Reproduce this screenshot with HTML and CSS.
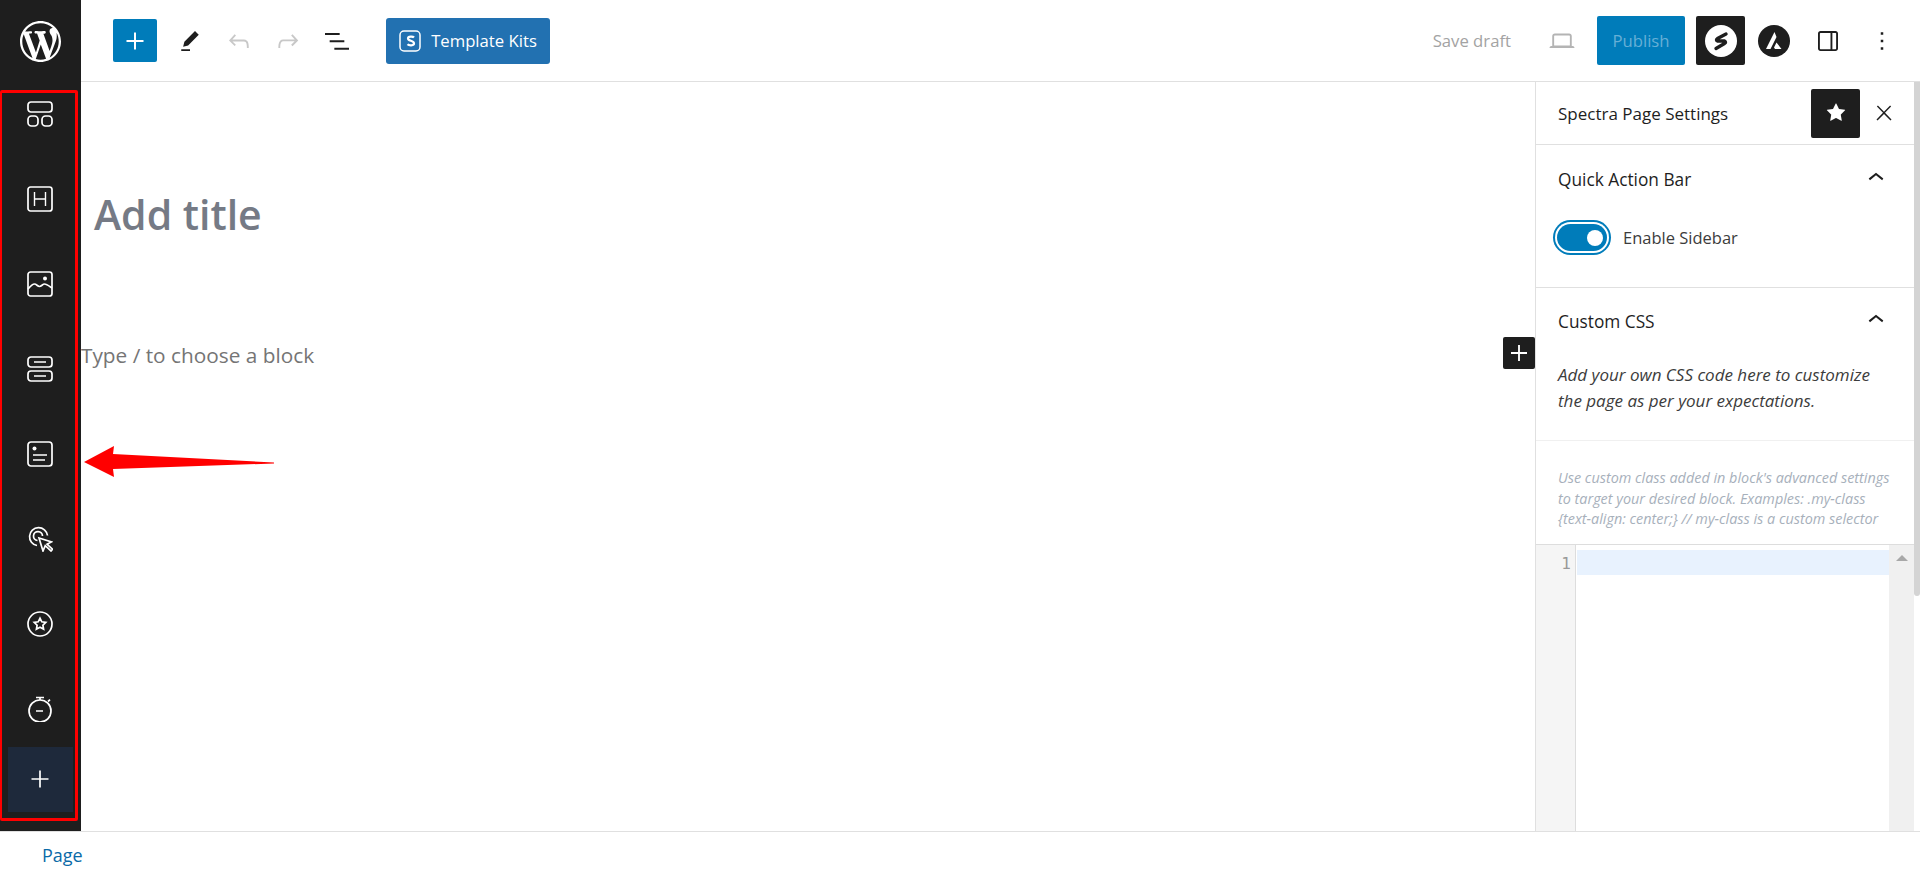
FILE: index.html
```html
<!DOCTYPE html>
<html lang="en">
<head>
    <meta charset="UTF-8">
    <title>Add New Page</title>
    <link rel="stylesheet" href="styles.css">
</head>
<body>
    <div class="app">
        <aside class="rail">
            <div class="rail-logo">
                <svg width="41" height="41" viewBox="0 0 20 20" fill="#fff"><path d="M20 10c0-5.51-4.49-10-10-10C4.48 0 0 4.49 0 10c0 5.52 4.48 10 10 10 5.51 0 10-4.48 10-10zM7.78 15.37L4.37 6.22c.55-.02 1.17-.08 1.17-.08.5-.06.44-1.13-.06-1.11 0 0-1.45.11-2.37.11-.18 0-.37 0-.58-.01C4.12 2.69 6.87 1.11 10 1.11c2.33 0 4.45.87 6.05 2.34-.68-.11-1.65.39-1.65 1.58 0 .74.45 1.36.9 2.1.35.61.55 1.36.55 2.46 0 1.49-1.4 5-1.4 5l-3.03-8.37c.54-.02.82-.17.82-.17.5-.05.44-1.25-.06-1.22 0 0-1.44.12-2.38.12-.87 0-2.33-.12-2.33-.12-.5-.03-.56 1.2-.06 1.22l.92.08 1.26 3.41zM17.41 10c.24-.64.74-1.87.43-4.25.7 1.29 1.05 2.71 1.05 4.25 0 3.29-1.73 6.24-4.4 7.78.97-2.59 1.94-5.2 2.92-7.78zM6.1 18.09C3.12 16.65 1.11 13.53 1.11 10c0-1.3.23-2.48.72-3.59C3.25 10.3 4.67 14.2 6.1 18.09zm4.03-6.63l2.58 6.98c-.86.29-1.76.45-2.71.45-.79 0-1.57-.11-2.29-.33.81-2.38 1.62-4.74 2.42-7.1z"/></svg>
            </div>
            <div class="rail-items">
                <div class="rail-item">
                    <svg class="rail-icon" viewBox="0 0 26 26"><rect x="1" y="1" width="24" height="10" rx="3"/><rect x="1" y="15" width="10" height="10" rx="3.5"/><rect x="15" y="15" width="10" height="10" rx="3.5"/></svg>
                </div>
                <div class="rail-item">
                    <svg class="rail-icon" viewBox="0 0 26 26"><rect x="1" y="1" width="24" height="24" rx="2.5"/><path class="thin" d="M7.500 6v14M18.500 6v14M7.500 13h11"/></svg>
                </div>
                <div class="rail-item">
                    <svg class="rail-icon" viewBox="0 0 26 26"><rect x="1" y="1" width="24" height="24" rx="2.5"/><path d="M1 18c2.500-3 4.500-5 6.500-5s3 2.500 5 2.500 3-2.500 5-2.500 4.500 2 7.500 4"/><circle class="fill" cx="18" cy="7.500" r="2"/></svg>
                </div>
                <div class="rail-item">
                    <svg class="rail-icon" viewBox="0 0 26 26"><rect x="1" y="1" width="24" height="10" rx="3"/><rect x="1" y="15" width="24" height="10" rx="3"/><path class="thin" d="M7 6h12M7 20h12"/></svg>
                </div>
                <div class="rail-item">
                    <svg class="rail-icon" viewBox="0 0 26 26"><rect x="1" y="1" width="24" height="24" rx="3"/><circle class="fill" cx="7.500" cy="7.500" r="2"/><path class="thin" d="M6 14h14M6 19h12"/></svg>
                </div>
                <div class="rail-item">
                    <svg class="rail-icon" viewBox="0 0 26 26"><path d="M10 19.500a9 9 0 1 1 10.500-10M10.500 14.500a4.500 4.500 0 1 1 5-4.500"/><path d="M12 12l4 13 2.200-5.300 5.800 5.300 1.500-1.800-5.500-5 4.500-2.300z"/></svg>
                </div>
                <div class="rail-item">
                    <svg class="rail-icon" viewBox="0 0 26 26"><circle cx="13" cy="13" r="12"/><path d="M13 7.200l1.800 3.600 4 .6-2.900 2.800.7 4-3.600-1.900-3.600 1.900.7-4-2.900-2.800 4-.6z"/></svg>
                </div>
                <div class="rail-item">
                    <svg class="rail-icon" viewBox="0 0 26 26"><circle cx="13" cy="15" r="11"/><path d="M9 1.500h8M13 1.500V4M21 5.500l2-1.800M9 15h7"/></svg>
                </div>
            </div>
            <div class="rail-add">
                <svg width="34" height="34" viewBox="0 0 24 24" fill="#fff"><path d="M18 11.400h-5.400V6h-1.200v5.400H6v1.200h5.400V18h1.200v-5.400H18z"/></svg>
            </div>
        </aside>

        <div class="workspace">
            <header class="topbar">
                <div class="topbar-left">
                    <button class="btn-inserter">
                        <svg width="34" height="34" viewBox="0 0 24 24" fill="#fff"><path d="M18 11.300h-5.300V6h-1.400v5.300H6v1.400h5.300V18h1.400v-5.300H18z"/></svg>
                    </button>
                    <svg class="tool" viewBox="0 0 24 24" fill="#1e1e1e"><path d="m19 7-3-3-8.500 8.500-1 4 4-1L19 7Zm-7 11.500H5V20h7v-1.500Z"/></svg>
                    <svg class="tool" viewBox="0 0 24 24" fill="#c8c8c8"><path d="M18.300 11.700c-.6-.6-1.400-.9-2.300-.9H6.700l2.900-3.300-1.100-1-4.500 5L8.500 16l1-1-2.700-2.700H16c.5 0 .9.2 1.300.5 1 1 1 3.400 1 4.500v.3h1.500v-.2c0-1.500 0-4.300-1.500-5.700z"/></svg>
                    <svg class="tool" viewBox="0 0 24 24" fill="#c8c8c8"><path d="M15.600 6.500l-1.100 1 2.900 3.300H8c-.9 0-1.700.3-2.300.9-1.400 1.500-1.400 4.200-1.400 5.600v.2h1.500v-.3c0-1.100 0-3.500 1-4.500.3-.3.7-.5 1.300-.5h9.200L14.500 15l1.100 1.100 4.600-4.600-4.600-5z"/></svg>
                    <svg class="tool tool-list" viewBox="0 0 24 24" fill="#1e1e1e"><path d="M3 6h11v1.500H3V6zm3.500 5.500h11V13h-11v-1.500zM21 17H10v1.500h11V17z"/></svg>
                    <button class="btn-kits">
                        <svg width="22" height="22" viewBox="0 0 22 22" fill="none" stroke="#fff" stroke-width="1.500"><rect x="1" y="1" width="20" height="20" rx="4"/><path d="M15 7.500c-1-1.200-6-1.500-6 1 0 2.800 6 1.800 6 5 0 2.300-5 2.200-6.500.8" stroke-width="2.200"/></svg>
                        Template Kits
                    </button>
                </div>
                <div class="topbar-right">
                    <span class="save-draft">Save draft</span>
                    <svg class="tool preview" viewBox="0 0 24 24" fill="#b4b4b4"><path d="M20.500 16h-.7V8c0-1.100-.9-2-2-2H6.200c-1.100 0-2 .9-2 2v8h-.7c-.8 0-1.500.7-1.500 1.500h20c0-.8-.7-1.500-1.500-1.500zM5.700 8c0-.3.2-.5.5-.5h11.600c.3 0 .5.2.5.5v7.600H5.700V8z"/></svg>
                    <button class="btn-publish">Publish</button>
                    <button class="btn-black btn-spectra">
                        <svg width="32" height="32" viewBox="0 0 32 32"><circle cx="16" cy="16" r="16" fill="#fff"/><path d="M21 9 12.500 13.500Q10.500 15 12.500 16H19.500Q21.500 17 19.500 18.500L11 23.500" fill="none" stroke="#1e1e1e" stroke-width="3.400" stroke-linecap="round" stroke-linejoin="round"/></svg>
                    </button>
                    <svg class="astra" width="32" height="32" viewBox="0 0 32 32"><circle cx="16" cy="16" r="16" fill="#1e1e1e"/><path d="M16.500 7 8 24h4.500l6-12zM18.500 17.500 16 22.500l1 1.500h6.500z" fill="#fff"/></svg>
                    <svg class="tool panel-toggle" viewBox="0 0 24 24" fill="#1e1e1e"><path d="M18 4H6c-1.100 0-2 .9-2 2v12c0 1.100.9 2 2 2h12c1.100 0 2-.9 2-2V6c0-1.100-.9-2-2-2zm-4 14.500H6c-.3 0-.5-.2-.5-.5V6c0-.3.2-.5.5-.5h8v13zm4.500-.5c0 .3-.2.5-.5.5h-2.500v-13H18c.3 0 .5.2.5.5v12z"/></svg>
                    <svg class="tool kebab" viewBox="0 0 24 24" fill="#1e1e1e"><path d="M13 19h-2v-2h2v2zm0-6h-2v-2h2v2zm0-6h-2V5h2v2z"/></svg>
                </div>
            </header>

            <div class="body-row">
                <main class="canvas">
                    <h1 class="post-title">Add title</h1>
                    <div class="block-row">
                        <p class="block-placeholder">Type / to choose a block</p>
                        <button class="btn-add-block">
                            <svg width="34" height="34" viewBox="0 0 24 24" fill="#fff"><path d="M18 11.300h-5.300V6h-1.400v5.300H6v1.400h5.300V18h1.400v-5.300H18z"/></svg>
                        </button>
                    </div>
                </main>

                <aside class="settings">
                    <div class="settings-header">
                        <span class="settings-title">Spectra Page Settings</span>
                        <button class="btn-black btn-star">
                            <svg width="30" height="30" viewBox="0 0 24 24" fill="#fff"><path d="M11.776 4.454a.25.25 0 01.448 0l2.069 4.192a.25.25 0 00.188.137l4.626.672a.25.25 0 01.139.426l-3.348 3.263a.25.25 0 00-.072.222l.79 4.607a.25.25 0 01-.362.263l-4.138-2.175a.25.25 0 00-.232 0l-4.138 2.175a.25.25 0 01-.363-.263l.79-4.607a.25.25 0 00-.071-.222L4.754 9.881a.25.25 0 01.139-.426l4.626-.672a.25.25 0 00.188-.137l2.069-4.192z"/></svg>
                        </button>
                        <svg class="close" width="24" height="24" viewBox="0 0 24 24" fill="#1e1e1e"><path d="M13 11.800l6.100-6.300-1-1-6.100 6.200-6.100-6.200-1 1 6.100 6.300-6.500 6.700 1 1 6.500-6.600 6.500 6.600 1-1z"/></svg>
                    </div>

                    <section class="panel panel-quick">
                        <div class="panel-head">
                            <span>Quick Action Bar</span>
                            <svg width="32" height="32" viewBox="0 0 24 24" fill="#1e1e1e"><path d="M6.500 12.400L12 8l5.500 4.400-.9 1.200L12 10l-4.500 3.600-1-1.200z"/></svg>
                        </div>
                        <label class="toggle-row">
                            <span class="toggle"><span class="toggle-knob"></span></span>
                            Enable Sidebar
                        </label>
                    </section>

                    <section class="panel panel-css">
                        <div class="panel-head">
                            <span>Custom CSS</span>
                            <svg width="32" height="32" viewBox="0 0 24 24" fill="#1e1e1e"><path d="M6.500 12.400L12 8l5.500 4.400-.9 1.200L12 10l-4.500 3.600-1-1.200z"/></svg>
                        </div>
                        <p class="css-intro">Add your own CSS code here to customize the page as per your expectations.</p>
                    </section>

                    <p class="css-help">Use custom class added in block's advanced settings to target your desired block. Examples: .my-class {text-align: center;} // my-class is a custom selector</p>

                    <div class="code-editor">
                        <div class="code-gutter">1</div>
                        <div class="code-lines"><div class="code-active"></div></div>
                        <div class="code-scroll"><span class="code-arrow"></span></div>
                    </div>
                </aside>
                <div class="page-scroll"><div class="page-thumb"></div></div>
            </div>
        </div>
    </div>

    <footer class="breadcrumb">Page</footer>

    <!-- annotations on top of the screenshot -->
    <div class="mark-box"></div>
    <svg class="mark-arrow" width="192" height="32" viewBox="0 0 192 32"><path d="M0 16 30 0 29 8 190 16.500V17.500L29 23 30 31z" fill="#f00"/></svg>
</body>
</html>
```

FILE: styles.css
```css
html, body {
    margin: 0;
    padding: 0;
    height: 100%;
    overflow: hidden;
    background-color: #fff;
    font-family: "Open Sans", "Noto Sans", sans-serif;
    color: #1e1e1e;
}
body {
    display: flex;
    flex-direction: column;
    position: relative;
}
button {
    border: none;
    padding: 0;
    font-family: inherit;
    display: flex;
    align-items: center;
    justify-content: center;
}
.app {
    flex: 1;
    display: flex;
    min-height: 0;
}
/* Left rail */
.rail {
    width: 81px;
    flex-shrink: 0;
    background-color: #1e1e1e;
    display: flex;
    flex-direction: column;
    align-items: center;
}
.rail-logo {
    height: 82px;
    display: flex;
    align-items: center;
    justify-content: center;
}
.rail-items {
    display: flex;
    flex-direction: column;
    align-items: center;
    padding-top: 19px;
    margin-left: -1px;
    gap: 59px;
}
.rail-item {
    height: 26px;
}
.rail-icon {
    display: block;
    width: 26px;
    height: 26px;
    fill: none;
    stroke: #fff;
    stroke-width: 1.7;
}
.rail-icon .thin {
    stroke-width: 1.4;
}
.rail-icon .fill {
    fill: #fff;
    stroke: none;
}
.rail-add {
    width: 65px;
    height: 65px;
    margin-top: 25px;
    background-color: #1e293b;
    display: flex;
    align-items: center;
    justify-content: center;
}
.rail-add svg {
    margin: -2px 0 0 -1px;
}
/* Top bar */
.workspace {
    flex: 1;
    min-width: 0;
    display: flex;
    flex-direction: column;
}
.topbar {
    height: 81px;
    flex-shrink: 0;
    border-bottom: 1px solid #e0e0e0;
    display: flex;
    align-items: center;
    justify-content: space-between;
}
.topbar-left, .topbar-right {
    display: flex;
    align-items: center;
}
.topbar-left {
    padding-left: 32px;
}
.btn-inserter {
    width: 44px;
    height: 43px;
    background-color: #007cba;
    border-radius: 2px;
    margin-right: 18px;
}
.tool {
    width: 30px;
    height: 30px;
    flex-shrink: 0;
    margin-right: 19px;
}
.tool-list {
    width: 32px;
    height: 32px;
    margin-left: -1px;
}
.btn-kits {
    width: 164px;
    height: 46px;
    margin-left: 14px;
    gap: 10px;
    background-color: #2271b1;
    border-radius: 3px;
    color: #fff;
    font-size: 16.7px;
}
.topbar-right {
    padding-right: 23px;
}
.save-draft {
    font-size: 16.7px;
    color: #a3a3a3;
    margin-right: 36px;
}
.tool.preview {
    margin-right: 20px;
}
.btn-publish {
    width: 88px;
    height: 49px;
    background-color: #007cba;
    border-radius: 2px;
    color: #66afd6;
    font-size: 16.7px;
    margin-right: 11px;
}
.btn-black {
    width: 49px;
    height: 49px;
    background-color: #1e1e1e;
    border-radius: 2px;
}
.astra {
    margin-left: 13px;
    margin-right: 23px;
}
.tool.panel-toggle {
    margin-right: 24px;
}
.tool.kebab {
    margin-right: 0;
}
/* Canvas */
.body-row {
    flex: 1;
    min-height: 0;
    display: flex;
}
.canvas {
    flex: 1;
    min-width: 0;
    display: flex;
    flex-direction: column;
}
.post-title {
    margin: 104px 0 0 13px;
    font-size: 41px;
    line-height: 56px;
    font-weight: 600;
    color: #757a85;
}
.block-row {
    display: flex;
    align-items: center;
    justify-content: space-between;
    margin-top: 95px;
}
.block-placeholder {
    margin: 4px 0 0;
    font-size: 20.8px;
    color: #757575;
}
.btn-add-block {
    width: 32px;
    height: 32px;
    background-color: #1e1e1e;
    border-radius: 2px;
}
/* Settings sidebar */
.settings {
    width: 378px;
    flex-shrink: 0;
    border-left: 1px solid #e0e0e0;
    display: flex;
    flex-direction: column;
    font-size: 17px;
}
.settings-header {
    height: 62px;
    flex-shrink: 0;
    display: flex;
    align-items: center;
    padding-left: 22px;
    border-bottom: 1px solid #e0e0e0;
}
.settings-title {
    flex: 1;
    font-weight: 500;
}
.close {
    margin: 0 18px 0 12px;
}
.panel {
    flex-shrink: 0;
    padding: 0 22px;
    border-bottom: 1px solid #e0e0e0;
}
.panel-quick {
    height: 142px;
}
.panel-css {
    height: 152px;
    border-bottom-color: #f0f0f0;
}
.panel-head {
    height: 68px;
    display: flex;
    align-items: center;
    justify-content: space-between;
    font-size: 17.3px;
    font-weight: 500;
}
.panel-head svg {
    margin-right: 0;
    margin-top: -3px;
}
.panel-css .panel-head {
    height: 67px;
}
.toggle-row {
    display: flex;
    align-items: center;
    gap: 12px;
    margin-left: -5px;
    margin-top: 7px;
    font-size: 16.5px;
    color: #3c3c3c;
}
.toggle {
    width: 50px;
    height: 27px;
    border-radius: 18px;
    background-color: #007cba;
    box-shadow: 0 0 0 2px #fff, 0 0 0 4px #007cba;
    margin: 4px;
    display: flex;
    align-items: center;
    justify-content: flex-end;
    padding-right: 4px;
    box-sizing: border-box;
}
.toggle-knob {
    width: 16px;
    height: 16px;
    border-radius: 50%;
    background-color: #fff;
}
.css-intro {
    margin: 0;
    padding-top: 7px;
    font-style: italic;
    line-height: 26px;
    color: #3c3c3c;
}
.css-help {
    flex-shrink: 0;
    margin: 0;
    padding: 27px 20px 14px 22px;
    font-size: 14.4px;
    line-height: 20.5px;
    font-style: italic;
    color: #a7b0bb;
    border-bottom: 1px solid #ddd;
}
.code-editor {
    flex: 1;
    min-height: 0;
    display: flex;
}
.code-gutter {
    width: 40px;
    flex-shrink: 0;
    box-sizing: border-box;
    background-color: #f5f5f5;
    border-right: 1px solid #ddd;
    padding: 6px 4px 0 0;
    text-align: right;
    font-family: "DejaVu Sans Mono", monospace;
    font-size: 16px;
    line-height: 25px;
    color: #999;
}
.code-lines {
    flex: 1;
    min-width: 0;
    padding: 5px 0 0 1px;
}
.code-active {
    height: 25px;
    background-color: #e8f2fe;
}
.code-scroll {
    width: 25px;
    flex-shrink: 0;
    background-color: #f0f0f0;
    display: flex;
    justify-content: center;
    padding-top: 10px;
}
.code-arrow {
    width: 0;
    height: 0;
    border-left: 6px solid transparent;
    border-right: 6px solid transparent;
    border-bottom: 6px solid #a8a8a8;
}
.page-scroll {
    width: 6px;
    flex-shrink: 0;
}
.page-thumb {
    height: 514px;
    background-color: #d4d4d4;
    border-radius: 0 0 3px 3px;
}
/* Bottom breadcrumb */
.breadcrumb {
    height: 47px;
    flex-shrink: 0;
    box-sizing: border-box;
    border-top: 1px solid #e0e0e0;
    padding-left: 42px;
    font-size: 18px;
    font-weight: 500;
    line-height: 47px;
    color: #0a6aa8;
}
/* Red annotations */
.mark-box {
    position: absolute;
    left: 0;
    top: 90px;
    width: 78px;
    height: 731px;
    box-sizing: border-box;
    border: 3px solid #f00;
    border-left-width: 2px;
    border-radius: 2px;
}
.mark-arrow {
    position: absolute;
    left: 84px;
    top: 446px;
}
```
